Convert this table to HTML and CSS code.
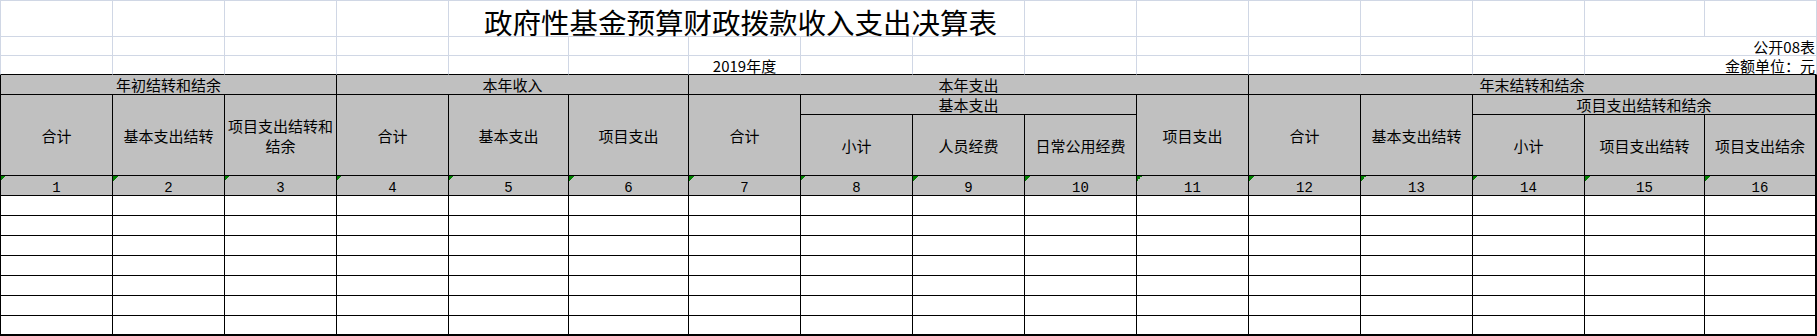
FILE: index.html
```html
<!DOCTYPE html>
<html lang="zh-CN">
<head>
<meta charset="utf-8">
<title>政府性基金预算财政拨款收入支出决算表</title>
<link rel="stylesheet" href="styles.css">
</head>
<body>
<div class="sheet">
  <!-- row 1 -->
  <div class="g top gl"></div>
  <div class="g top"></div>
  <div class="g top"></div>
  <div class="g top"></div>
  <div class="g top title">政府性基金预算财政拨款收入支出决算表</div>
  <div class="g top"></div>
  <div class="g top"></div>
  <div class="g top"></div>
  <div class="g top"></div>
  <div class="g top"></div>
  <div class="g top"></div>
  <div class="g top"></div>
  <!-- row 2 -->
  <div class="g gl"></div>
  <div class="g"></div>
  <div class="g"></div>
  <div class="g"></div>
  <div class="g"></div>
  <div class="g"></div>
  <div class="g"></div>
  <div class="g"></div>
  <div class="g"></div>
  <div class="g"></div>
  <div class="g"></div>
  <div class="g"></div>
  <div class="g"></div>
  <div class="g"></div>
  <div class="g note span2">公开08表</div>
  <!-- row 3 -->
  <div class="g edge gl"></div>
  <div class="g edge"></div>
  <div class="g edge"></div>
  <div class="g edge"></div>
  <div class="g edge"></div>
  <div class="g edge"></div>
  <div class="g edge year">2019年度</div>
  <div class="g edge"></div>
  <div class="g edge"></div>
  <div class="g edge"></div>
  <div class="g edge"></div>
  <div class="g edge"></div>
  <div class="g edge"></div>
  <div class="g edge"></div>
  <div class="g edge note span2">金额单位：元</div>

  <!-- row 4: group headers -->
  <div class="h bl span3">年初结转和结余</div>
  <div class="h span3">本年收入</div>
  <div class="h span5">本年支出</div>
  <div class="h r span5">年末结转和结余</div>

  <!-- rows 5-6: column headers -->
  <div class="h bl tall">合计</div>
  <div class="h tall">基本支出结转</div>
  <div class="h tall">项目支出结转和结余</div>
  <div class="h tall">合计</div>
  <div class="h tall">基本支出</div>
  <div class="h tall">项目支出</div>
  <div class="h tall">合计</div>
  <div class="h span3">基本支出</div>
  <div class="h tall">项目支出</div>
  <div class="h tall">合计</div>
  <div class="h tall">基本支出结转</div>
  <div class="h r span3">项目支出结转和结余</div>
  <div class="h sub">小计</div>
  <div class="h sub">人员经费</div>
  <div class="h sub">日常公用经费</div>
  <div class="h sub">小计</div>
  <div class="h sub">项目支出结转</div>
  <div class="h r sub">项目支出结余</div>

  <!-- row 7: column numbers -->
  <div class="n bl">1</div>
  <div class="n">2</div>
  <div class="n">3</div>
  <div class="n">4</div>
  <div class="n">5</div>
  <div class="n">6</div>
  <div class="n">7</div>
  <div class="n">8</div>
  <div class="n">9</div>
  <div class="n">10</div>
  <div class="n">11</div>
  <div class="n">12</div>
  <div class="n">13</div>
  <div class="n">14</div>
  <div class="n">15</div>
  <div class="n r">16</div>

  <!-- data rows -->
  <div class="d bl"></div><div class="d"></div><div class="d"></div><div class="d"></div><div class="d"></div><div class="d"></div><div class="d"></div><div class="d"></div><div class="d"></div><div class="d"></div><div class="d"></div><div class="d"></div><div class="d"></div><div class="d"></div><div class="d"></div><div class="d r"></div>
  <div class="d bl"></div><div class="d"></div><div class="d"></div><div class="d"></div><div class="d"></div><div class="d"></div><div class="d"></div><div class="d"></div><div class="d"></div><div class="d"></div><div class="d"></div><div class="d"></div><div class="d"></div><div class="d"></div><div class="d"></div><div class="d r"></div>
  <div class="d bl"></div><div class="d"></div><div class="d"></div><div class="d"></div><div class="d"></div><div class="d"></div><div class="d"></div><div class="d"></div><div class="d"></div><div class="d"></div><div class="d"></div><div class="d"></div><div class="d"></div><div class="d"></div><div class="d"></div><div class="d r"></div>
  <div class="d bl"></div><div class="d"></div><div class="d"></div><div class="d"></div><div class="d"></div><div class="d"></div><div class="d"></div><div class="d"></div><div class="d"></div><div class="d"></div><div class="d"></div><div class="d"></div><div class="d"></div><div class="d"></div><div class="d"></div><div class="d r"></div>
  <div class="d bl"></div><div class="d"></div><div class="d"></div><div class="d"></div><div class="d"></div><div class="d"></div><div class="d"></div><div class="d"></div><div class="d"></div><div class="d"></div><div class="d"></div><div class="d"></div><div class="d"></div><div class="d"></div><div class="d"></div><div class="d r"></div>
  <div class="d bl"></div><div class="d"></div><div class="d"></div><div class="d"></div><div class="d"></div><div class="d"></div><div class="d"></div><div class="d"></div><div class="d"></div><div class="d"></div><div class="d"></div><div class="d"></div><div class="d"></div><div class="d"></div><div class="d"></div><div class="d r"></div>
  <div class="d bl b"></div><div class="d b"></div><div class="d b"></div><div class="d b"></div><div class="d b"></div><div class="d b"></div><div class="d b"></div><div class="d b"></div><div class="d b"></div><div class="d b"></div><div class="d b"></div><div class="d b"></div><div class="d b"></div><div class="d b"></div><div class="d b"></div><div class="d r b"></div>
</div>
</body>
</html>
```

FILE: styles.css
```css
* {
  box-sizing: border-box;
}

html,
body {
  margin: 0;
  padding: 0;
  background: #ffffff;
}

body {
  font-family: "Noto Sans CJK SC", "Noto Sans", sans-serif;
  font-size: 15px;
  color: #000000;
}

.sheet {
  display: grid;
  width: 1817px;
  grid-template-columns: 113px 112px 112px 112px 120px 120px repeat(8, 112px) 120px 112px;
  grid-template-rows: 37px 19px 19px 20px 20px 61px 20px repeat(7, 20px);
}

/* worksheet gridline cells (above the table) */
.g {
  border-right: 1px solid #d0d7e5;
  border-bottom: 1px solid #d0d7e5;
  background: #ffffff;
}

.top {
  border-top: 1px solid #d0d7e5;
}

.gl {
  border-left: 1px solid #d0d7e5;
}

.edge {
  border-bottom-color: #000000;
}

.title {
  grid-column: span 5;
  display: flex;
  align-items: flex-end;
  justify-content: center;
  padding-left: 8px;
  font-size: 28.5px;
  line-height: 28px;
  white-space: nowrap;
}

.note {
  display: flex;
  align-items: flex-end;
  justify-content: flex-end;
  padding-right: 1px;
  line-height: 16px;
  white-space: nowrap;
}

.year {
  display: flex;
  align-items: flex-end;
  justify-content: center;
  line-height: 16px;
  white-space: nowrap;
}

.span2 {
  grid-column: span 2;
}

.span3 {
  grid-column: span 3;
}

.span5 {
  grid-column: span 5;
}

/* table header cells */
.h {
  display: flex;
  align-items: center;
  justify-content: center;
  text-align: center;
  line-height: 20px;
  background: #c0c0c0;
  border-right: 1px solid #000000;
  border-bottom: 1px solid #000000;
  padding: 1px 2px 0;
}

.tall {
  grid-row: span 2;
}

.sub {
  padding-top: 2px;
}

/* column-number row */
.n {
  background:
    linear-gradient(to bottom right, #008000 50%, transparent 50%) 0 0 / 5px 5px no-repeat,
    #c0c0c0;
  border-right: 1px solid #000000;
  border-bottom: 1px solid #000000;
  font-family: "Liberation Mono", "DejaVu Sans Mono", monospace;
  font-size: 14px;
  line-height: 14px;
  text-align: center;
  padding-top: 5px;
}

/* data cells */
.d {
  background: #ffffff;
  border-right: 1px solid #000000;
  border-bottom: 1px solid #000000;
}

.bl {
  border-left: 1px solid #000000;
}

.r {
  border-right-width: 2px;
}

.b {
  border-bottom-width: 2px;
}
```
